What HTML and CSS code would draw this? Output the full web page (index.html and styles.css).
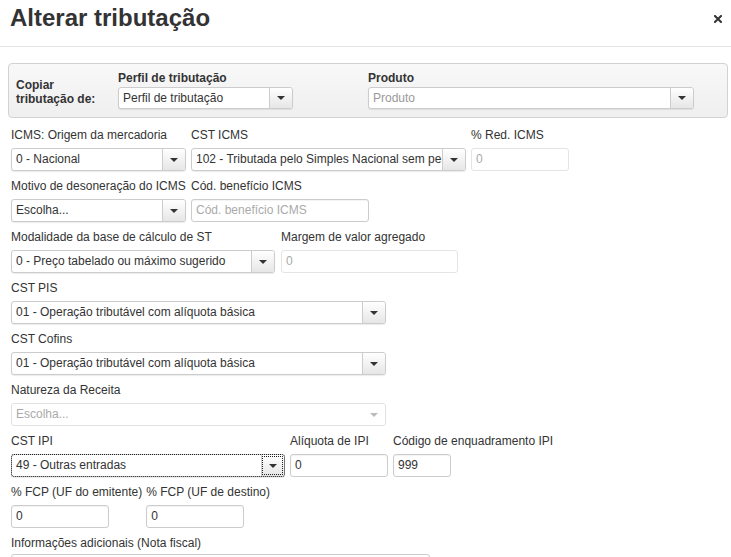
FILE: index.html
```html
<!DOCTYPE html>
<html lang="pt-BR">
<head>
  <meta charset="UTF-8">
  <title>Alterar tributação</title>
  <link rel="stylesheet" href="styles.css">
</head>

<body>

  <!-- Header -->
  <div class="modal-header">
    <h1 class="modal-title">Alterar tributação</h1>
    <span class="close-btn">
      <svg width="8" height="8" viewBox="0 0 8 8"><path d="M1 1L7 7M7 1L1 7" stroke="#333" stroke-width="2" stroke-linecap="square"/></svg>
    </span>
  </div>

  <div class="modal-body">

    <!-- Copy box -->
    <div class="copy-box">
      <div class="copy-title">Copiar<br>tributação de:</div>
      <div class="copy-field copy-perfil">
        <label class="copy-label">Perfil de tributação</label>
        <div class="select select-sm">
          <span class="select-value">Perfil de tributação</span>
          <span class="select-btn"><i class="caret"></i></span>
        </div>
      </div>
      <div class="copy-field copy-produto">
        <label class="copy-label">Produto</label>
        <div class="select select-sm">
          <span class="select-value placeholder">Produto</span>
          <span class="select-btn"><i class="caret"></i></span>
        </div>
      </div>
    </div>

    <!-- Form -->
    <div class="form">
      <div class="form-row gap-5">
        <div class="field w175">
          <label>ICMS: Origem da mercadoria</label>
          <div class="select"><span class="select-value">0 - Nacional</span><span class="select-btn"><i class="caret"></i></span></div>
        </div>
        <div class="field w275">
          <label>CST ICMS</label>
          <div class="select"><span class="select-value">102 - Tributada pelo Simples Nacional sem permissão de crédito</span><span class="select-btn"><i class="caret"></i></span></div>
        </div>
        <div class="field w98">
          <label>% Red. ICMS</label>
          <div class="input disabled placeholder">0</div>
        </div>
      </div>

      <div class="form-row gap-5">
        <div class="field w175">
          <label>Motivo de desoneração do ICMS</label>
          <div class="select"><span class="select-value">Escolha...</span><span class="select-btn"><i class="caret"></i></span></div>
        </div>
        <div class="field w178">
          <label>Cód. benefício ICMS</label>
          <div class="input placeholder">Cód. benefício ICMS</div>
        </div>
      </div>

      <div class="form-row gap-6">
        <div class="field w264">
          <label>Modalidade da base de cálculo de ST</label>
          <div class="select"><span class="select-value">0 - Preço tabelado ou máximo sugerido</span><span class="select-btn"><i class="caret"></i></span></div>
        </div>
        <div class="field w177">
          <label>Margem de valor agregado</label>
          <div class="input disabled placeholder">0</div>
        </div>
      </div>

      <div class="form-row">
        <div class="field w375">
          <label>CST PIS</label>
          <div class="select"><span class="select-value">01 - Operação tributável com alíquota básica</span><span class="select-btn"><i class="caret"></i></span></div>
        </div>
      </div>

      <div class="form-row">
        <div class="field w375">
          <label>CST Cofins</label>
          <div class="select"><span class="select-value">01 - Operação tributável com alíquota básica</span><span class="select-btn"><i class="caret"></i></span></div>
        </div>
      </div>

      <div class="form-row">
        <div class="field w375">
          <label>Natureza da Receita</label>
          <div class="select disabled"><span class="select-value">Escolha...</span><span class="select-btn"><i class="caret"></i></span></div>
        </div>
      </div>

      <div class="form-row gap-5">
        <div class="field w274">
          <label>CST IPI</label>
          <div class="select focused"><span class="select-value">49 - Outras entradas</span><span class="select-btn"><i class="caret"></i></span></div>
        </div>
        <div class="field w98">
          <label>Alíquota de IPI</label>
          <div class="input">0</div>
        </div>
        <div class="field">
          <label>Código de enquadramento IPI</label>
          <div class="input w58">999</div>
        </div>
      </div>

      <div class="form-row gap-4">
        <div class="field">
          <label>% FCP (UF do emitente)</label>
          <div class="input w98">0</div>
        </div>
        <div class="field">
          <label>% FCP (UF de destino)</label>
          <div class="input w98">0</div>
        </div>
      </div>

      <div class="form-row">
        <div class="field">
          <label>Informações adicionais (Nota fiscal)</label>
          <div class="textarea"></div>
        </div>
      </div>
    </div>
  </div>

</body>
</html>
```

FILE: styles.css
```css
html, body {
  margin: 0;
  padding: 0;
  background: #fff;
  color: #333;
  font-family: 'Liberation Sans', Arial, sans-serif;
  font-size: 12px;
  overflow: hidden;
}

/* Header */

.modal-header {
  height: 47px;
  box-sizing: border-box;
  padding: 3px 9px 0 10px;
  border-bottom: 1px solid #e5e5e5;
  display: flex;
  justify-content: space-between;
  align-items: flex-start;
}

.modal-title {
  margin: 0;
  font-family: 'Liberation Sans Narrow', 'Liberation Sans', sans-serif;
  font-stretch: condensed;
  font-size: 24px;
  line-height: 30px;
  font-weight: 700;
  color: #333;
}

.close-btn {
  margin-top: 12px;
  line-height: 0;
}

.modal-body {
  padding: 16px 3px 0 8px;
}

/* Copy box */

.copy-box {
  height: 55px;
  box-sizing: border-box;
  border: 1px solid #d2d2d2;
  border-radius: 4px;
  background: linear-gradient(#f8f8f8, #efefef);
  display: flex;
  align-items: center;
  padding: 0 0 0 7px;
}

.copy-title {
  width: 102px;
  font-weight: 700;
  line-height: 14px;
  margin-top: 3px;
}

.copy-field {
  display: flex;
  flex-direction: column;
  margin-top: -1px;
}

.copy-perfil {
  width: 250px;
}

.copy-perfil .select {
  width: 175px;
}

.copy-produto .select {
  width: 326px;
}

.copy-label {
  font-weight: 700;
  line-height: 14px;
  margin-bottom: 2px;
}

/* Form */

.form {
  padding: 10px 0 0 3px;
}

.form-row {
  display: flex;
  margin-bottom: 8px;
}

.gap-4 { gap: 4px; }
.gap-5 { gap: 5px; }
.gap-6 { gap: 6px; }

.field {
  display: flex;
  flex-direction: column;
}

.field label {
  line-height: 14px;
  margin-bottom: 6px;
  white-space: nowrap;
}

.w58 { width: 58px; }
.w98 { width: 98px; }
.w175 { width: 175px; }
.w177 { width: 177px; }
.w178 { width: 178px; }
.w264 { width: 264px; }
.w274 { width: 274px; }
.w275 { width: 275px; }
.w375 { width: 375px; }

/* Select */

.select {
  height: 23px;
  box-sizing: border-box;
  border: 1px solid #ccc;
  border-radius: 3px;
  background: #fff;
  display: flex;
  align-items: stretch;
  overflow: hidden;
  box-shadow: 0 1px 1px rgba(0, 0, 0, 0.08);
}

.select-sm {
  height: 22px;
}

.select-value {
  flex: 1;
  min-width: 0;
  padding-left: 4px;
  line-height: 20px;
  white-space: nowrap;
  overflow: hidden;
}

.select-btn {
  width: 22px;
  flex: none;
  border-left: 1px solid #ccc;
  border-radius: 0 2px 2px 0;
  background: linear-gradient(#fff, #e6e6e6);
  display: flex;
  align-items: center;
  justify-content: center;
}

.caret {
  width: 0;
  height: 0;
  border-left: 4px solid transparent;
  border-right: 4px solid transparent;
  border-top: 4px solid #333;
}

.placeholder {
  color: #999;
}

.select.disabled {
  border-color: #e2e2e2;
  box-shadow: none;
  color: #aaa;
}

.select.disabled .select-btn {
  border-left: none;
  background: #fff;
}

.select.disabled .caret {
  border-top-color: #bbb;
}

.select.focused {
  outline: 1px dotted #222;
  outline-offset: -1px;
}

.select.focused .select-btn {
  outline: 1px dotted #222;
  outline-offset: -2px;
}

/* Inputs */

.input {
  height: 23px;
  box-sizing: border-box;
  border: 1px solid #ccc;
  border-radius: 3px;
  background: #fff;
  padding-left: 4px;
  line-height: 21px;
  box-shadow: inset 0 1px 1px rgba(0, 0, 0, 0.05);
  white-space: nowrap;
  overflow: hidden;
}

.input.disabled {
  border-color: #e4e4e4;
  box-shadow: none;
  color: #bbb;
}

.input.placeholder {
  color: #aaa;
}

.textarea {
  width: 419px;
  height: 60px;
  box-sizing: border-box;
  border: 1px solid #ccc;
  border-radius: 3px;
  margin-top: -2px;
}
```
